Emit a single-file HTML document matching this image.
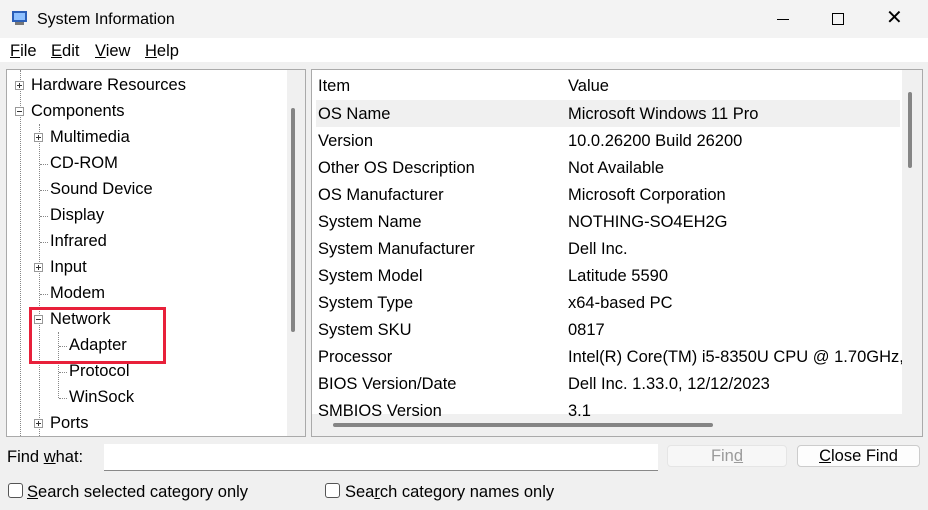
<!DOCTYPE html>
<html><head><style>
*{margin:0;padding:0;box-sizing:border-box}
body{width:928px;height:510px;background:#f0f0f0;font-family:"Liberation Sans",sans-serif;font-size:16.5px;color:#000;position:relative;overflow:hidden}
.a{position:absolute;white-space:nowrap}
u{text-decoration:underline}
.dv{position:absolute;border-left:1px dotted #888}
.dh{position:absolute;border-top:1px dotted #888;height:0}
.pm{position:absolute;width:9px;height:9px;border:1px solid #999;background:#fff}
.pm:before{content:"";position:absolute;left:1px;top:3px;width:5px;height:1px;background:#333}
.pl:after{content:"";position:absolute;left:3px;top:1px;width:1px;height:5px;background:#333}
</style></head><body>
<div class="a" style="left:0;top:0;width:928px;height:38px;background:#f3f3f3"></div>
<svg class="a" style="left:11px;top:9px" width="18" height="18" viewBox="0 0 18 18"><rect x="1" y="2" width="15" height="11" fill="#2b5fb8"/><rect x="3" y="4" width="11" height="7" fill="#8fc1ff"/><rect x="4" y="13" width="9" height="3" fill="#777"/></svg>
<div class="a" style="left:37px;top:11px;font-size:16px">System Information</div>
<div class="a" style="left:777px;top:19px;width:12px;height:1px;background:#000"></div>
<div class="a" style="left:832px;top:13px;width:12px;height:12px;border:1px solid #000"></div>
<div class="a" style="left:886px;top:5px;font-size:20px;font-weight:300">✕</div>
<div class="a" style="left:0;top:38px;width:928px;height:24px;background:#fff"></div>
<div class="a" style="left:10px;top:42px"><u>F</u>ile</div>
<div class="a" style="left:51px;top:42px"><u>E</u>dit</div>
<div class="a" style="left:95px;top:42px"><u>V</u>iew</div>
<div class="a" style="left:145px;top:42px"><u>H</u>elp</div>

<div class="a" style="left:6px;top:69px;width:300px;height:368px;background:#fff;border:1px solid #aaa"></div>
<div class="a" style="left:287px;top:70px;width:18px;height:366px;background:#f0f0f0"></div>
<div class="a" style="left:291px;top:108px;width:4px;height:224px;background:#858585;border-radius:2px"></div>
<div class="dv" style="left:20px;top:70px;height:366px"></div>
<div class="dv" style="left:39px;top:124px;height:312px"></div>
<div class="dv" style="left:58px;top:332px;height:66px"></div>
<div class="pm pl" style="left:15px;top:81px"></div>
<div class="pm" style="left:15px;top:107px"></div>
<div class="pm pl" style="left:34px;top:133px"></div>
<div class="pm pl" style="left:34px;top:263px"></div>
<div class="pm" style="left:34px;top:315px"></div>
<div class="pm pl" style="left:34px;top:419px"></div>
<div class="dh" style="left:40px;top:164px;width:8px"></div>
<div class="dh" style="left:40px;top:190px;width:8px"></div>
<div class="dh" style="left:40px;top:216px;width:8px"></div>
<div class="dh" style="left:40px;top:242px;width:8px"></div>
<div class="dh" style="left:40px;top:294px;width:8px"></div>
<div class="dh" style="left:59px;top:346px;width:8px"></div>
<div class="dh" style="left:59px;top:372px;width:8px"></div>
<div class="dh" style="left:59px;top:398px;width:8px"></div>
<div class="a" style="left:31px;top:76px">Hardware Resources</div>
<div class="a" style="left:31px;top:102px">Components</div>
<div class="a" style="left:50px;top:128px">Multimedia</div>
<div class="a" style="left:50px;top:154px">CD-ROM</div>
<div class="a" style="left:50px;top:180px">Sound Device</div>
<div class="a" style="left:50px;top:206px">Display</div>
<div class="a" style="left:50px;top:232px">Infrared</div>
<div class="a" style="left:50px;top:258px">Input</div>
<div class="a" style="left:50px;top:284px">Modem</div>
<div class="a" style="left:50px;top:310px">Network</div>
<div class="a" style="left:69px;top:336px">Adapter</div>
<div class="a" style="left:69px;top:362px">Protocol</div>
<div class="a" style="left:69px;top:388px">WinSock</div>
<div class="a" style="left:50px;top:414px">Ports</div>
<div class="a" style="left:29px;top:307px;width:137px;height:57px;border:3px solid #e8203a"></div>

<div class="a" style="left:311px;top:69px;width:612px;height:368px;background:#f0f0f0;border:1px solid #aaa"></div>
<div class="a" style="left:312px;top:70px;width:590px;height:344px;background:#fff"></div>
<div class="a" style="left:316px;top:100px;width:584px;height:27px;background:#f0f0f0"></div>
<div class="a" style="left:908px;top:92px;width:4px;height:76px;background:#858585;border-radius:2px"></div>
<div class="a" style="left:318px;top:77px">Item</div>
<div class="a" style="left:568px;top:77px">Value</div>
<div class="a" style="left:318px;top:101px;line-height:27px">OS Name<br>Version<br>Other OS Description<br>OS Manufacturer<br>System Name<br>System Manufacturer<br>System Model<br>System Type<br>System SKU<br>Processor<br>BIOS Version/Date<br>SMBIOS Version</div>
<div class="a" style="left:568px;top:101px;line-height:27px">Microsoft Windows 11 Pro<br>10.0.26200 Build 26200<br>Not Available<br>Microsoft Corporation<br>NOTHING-SO4EH2G<br>Dell Inc.<br>Latitude 5590<br>x64-based PC<br>0817<br>Intel(R) Core(TM) i5-8350U CPU @ 1.70GHz,<br>Dell Inc. 1.33.0, 12/12/2023<br>3.1</div>
<div class="a" style="left:312px;top:416px;width:590px;height:20px;background:#f0f0f0"></div>
<div class="a" style="left:902px;top:70px;width:20px;height:366px;background:#f0f0f0"></div>
<div class="a" style="left:908px;top:92px;width:4px;height:76px;background:#858585;border-radius:2px"></div>
<div class="a" style="left:333px;top:423px;width:380px;height:4px;background:#858585;border-radius:2px"></div>

<div class="a" style="left:7px;top:448px">Find <u>w</u>hat:</div>
<div class="a" style="left:104px;top:444px;width:554px;height:27px;background:#fff;border-bottom:1px solid #888"></div>
<div class="a" style="left:667px;top:445px;width:120px;height:22px;background:#f7f7f7;border:1px solid #e5e5e5;border-radius:4px;color:#9a9a9a;text-align:center;line-height:20px">Fin<u>d</u></div>
<div class="a" style="left:797px;top:445px;width:123px;height:22px;background:#fdfdfd;border:1px solid #ccc;border-radius:4px;text-align:center;line-height:20px"><u>C</u>lose Find</div>
<div class="a" style="left:8px;top:483px;width:15px;height:15px;border:1px solid #555;border-radius:3px;background:#fff"></div>
<div class="a" style="left:27px;top:483px"><u>S</u>earch selected category only</div>
<div class="a" style="left:325px;top:483px;width:15px;height:15px;border:1px solid #555;border-radius:3px;background:#fff"></div>
<div class="a" style="left:345px;top:483px">Sea<u>r</u>ch category names only</div>
</body></html>
